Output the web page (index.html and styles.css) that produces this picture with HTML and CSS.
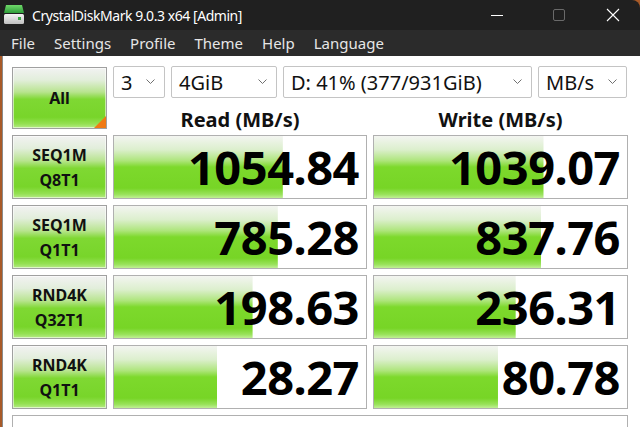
FILE: index.html
```html
<!DOCTYPE html>
<html lang="en">
<head>
<meta charset="utf-8">
<title>CrystalDiskMark 9.0.3 x64 [Admin]</title>
<link rel="stylesheet" href="styles.css">
</head>
<body>
<div class="window">
  <header class="titlebar">
    <svg class="app-icon" width="22" height="22" viewBox="0 0 22 22">
      <defs>
        <linearGradient id="g1" x1="0" y1="0" x2="0" y2="1">
          <stop offset="0" stop-color="#6fd86a"/>
          <stop offset="1" stop-color="#2f9e3a"/>
        </linearGradient>
        <linearGradient id="g2" x1="0" y1="0" x2="0" y2="1">
          <stop offset="0" stop-color="#f4f4f4"/>
          <stop offset="1" stop-color="#bfbfbf"/>
        </linearGradient>
      </defs>
      <path d="M3 1 H19 L21 9 H1 Z" fill="url(#g1)"/>
      <rect x="1" y="10" width="20" height="10" rx="1.5" fill="url(#g2)"/>
      <rect x="15" y="13" width="3" height="3" fill="#3aa845"/>
    </svg>
    <span class="title">CrystalDiskMark 9.0.3 x64 [Admin]</span>
    <div class="controls">
      <span class="ctl"><svg width="14" height="14" viewBox="0 0 14 14"><line x1="1" y1="7.5" x2="13" y2="7.5" stroke="#ffffff" stroke-width="1"/></svg></span>
      <span class="ctl"><svg width="14" height="14" viewBox="0 0 14 14"><rect x="1.5" y="1.5" width="11" height="11" rx="1.5" fill="none" stroke="#6a6a6a" stroke-width="1"/></svg></span>
      <span class="ctl"><svg width="14" height="14" viewBox="0 0 14 14"><path d="M1 1 L13 13 M13 1 L1 13" stroke="#ffffff" stroke-width="1.1"/></svg></span>
    </div>
  </header>
  <nav class="menubar">
    <span class="menu-item">File</span>
    <span class="menu-item">Settings</span>
    <span class="menu-item">Profile</span>
    <span class="menu-item">Theme</span>
    <span class="menu-item">Help</span>
    <span class="menu-item">Language</span>
  </nav>
  <main class="main">
    <div class="grid">
      <div class="btn all">All<span class="corner"></span></div>
      <div class="top">
        <div class="combos">
          <div class="combo c-count"><span>3</span><svg class="chev" width="9" height="6" viewBox="0 0 9 6"><polyline points="0.5,0.5 4.5,4.5 8.5,0.5" fill="none" stroke="#707070" stroke-width="1"/></svg></div>
          <div class="combo c-size"><span>4GiB</span><svg class="chev" width="9" height="6" viewBox="0 0 9 6"><polyline points="0.5,0.5 4.5,4.5 8.5,0.5" fill="none" stroke="#707070" stroke-width="1"/></svg></div>
          <div class="combo c-drive"><span>D: 41% (377/931GiB)</span><svg class="chev" width="9" height="6" viewBox="0 0 9 6"><polyline points="0.5,0.5 4.5,4.5 8.5,0.5" fill="none" stroke="#707070" stroke-width="1"/></svg></div>
          <div class="combo c-unit"><span>MB/s</span><svg class="chev" width="9" height="6" viewBox="0 0 9 6"><polyline points="0.5,0.5 4.5,4.5 8.5,0.5" fill="none" stroke="#707070" stroke-width="1"/></svg></div>
        </div>
        <div class="headers">
          <div class="head">Read (MB/s)</div>
          <div class="head">Write (MB/s)</div>
        </div>
      </div>

      <div class="btn label"><span>SEQ1M</span><span>Q8T1</span></div>
      <div class="cell" style="--fill: 67%">1054.84</div>
      <div class="cell" style="--fill: 67%">1039.07</div>

      <div class="btn label"><span>SEQ1M</span><span>Q1T1</span></div>
      <div class="cell" style="--fill: 65%">785.28</div>
      <div class="cell" style="--fill: 66%">837.76</div>

      <div class="btn label"><span>RND4K</span><span>Q32T1</span></div>
      <div class="cell" style="--fill: 55%">198.63</div>
      <div class="cell" style="--fill: 56%">236.31</div>

      <div class="btn label"><span>RND4K</span><span>Q1T1</span></div>
      <div class="cell" style="--fill: 41%">28.27</div>
      <div class="cell" style="--fill: 49%">80.78</div>

      <div class="comment"></div>
    </div>
  </main>
</div>
</body>
</html>
```
FILE: styles.css
```css
* { box-sizing: border-box; }

html, body {
  margin: 0;
  padding: 0;
  background: #ffffff;
  overflow: hidden;
}

body {
  width: 640px;
  height: 427px;
  font-family: "Noto Sans", "Open Sans", sans-serif;
  background: #a85a28;
}

.window {
  width: 640px;
  height: 427px;
  display: flex;
  flex-direction: column;
  overflow: hidden;
}

.titlebar {
  flex: none;
  height: 30px;
  background: #202020;
  border-top-right-radius: 8px;
  display: flex;
  align-items: center;
  color: #ffffff;
}

.app-icon {
  margin-left: 3px;
  margin-right: 7px;
  flex: none;
}

.title {
  font-size: 14px;
  letter-spacing: -0.45px;
  color: #ffffff;
}

.controls {
  margin-left: auto;
  display: flex;
  align-items: center;
}

.ctl {
  width: 62px;
  height: 30px;
  display: flex;
  align-items: center;
  justify-content: center;
}

.ctl:last-child {
  width: 46px;
  margin-right: 4px;
}

.menubar {
  flex: none;
  height: 26px;
  background: #2b2b2b;
  display: flex;
  align-items: center;
  padding-left: 11px;
  gap: 19px;
  color: #e6e6e6;
  font-size: 15px;
}

.main {
  flex: 1 1 auto;
  min-height: 0;
  overflow: hidden;
  background: #ffffff;
  margin-left: 2px;
  border-left: 1px solid #8a8a8a;
  padding: 10px 0 0 9px;
}

.grid {
  display: grid;
  grid-template-columns: 95px 254px 255px;
  grid-template-rows: 63px 64px 64px 64px 64px 40px;
  column-gap: 6px;
  row-gap: 6px;
}

.btn {
  border: 1px solid #a0a0a0;
  background: linear-gradient(to bottom,
    #f2f2f2 0%,
    #e2eedb 20%,
    #b8e48f 40%,
    #7fd833 52%,
    #78d52a 82%,
    #94e052 93%,
    #b6ea86 100%);
  box-shadow: inset 0 0 0 1px rgba(255,255,255,0.55);
  font-weight: 700;
  color: #111111;
  display: flex;
  flex-direction: column;
  align-items: center;
  justify-content: center;
}

.all {
  position: relative;
  margin-top: 1px;
  font-size: 16px;
}

.corner {
  position: absolute;
  right: 0;
  bottom: 0;
  width: 0;
  height: 0;
  border-style: solid;
  border-width: 0 0 12px 12px;
  border-color: transparent transparent #f07a14 transparent;
}

.label {
  font-size: 16px;
  line-height: 25px;
  padding-top: 2px;
}

.top {
  grid-column: 2 / 4;
  display: flex;
  flex-direction: column;
}

.combos {
  display: flex;
  gap: 6px;
  height: 32px;
}

.combo {
  height: 32px;
  border: 1px solid #c4c4c4;
  border-radius: 2px;
  background: #ffffff;
  display: flex;
  align-items: center;
  justify-content: space-between;
  padding: 0 9px 0 7px;
  font-size: 20px;
  color: #111111;
}

.c-count { width: 52px; }
.c-size { width: 106px; }
.c-drive { width: 249px; }
.c-unit { width: 89px; }

.chev { flex: none; margin-top: -1px; }

.headers {
  display: grid;
  grid-template-columns: 254px 255px;
  column-gap: 6px;
  padding-top: 10px;
}

.head {
  text-align: center;
  font-size: 20px;
  font-weight: 700;
  line-height: 24px;
  color: #111111;
}

.cell {
  border: 1px solid #b0b0b0;
  background:
    linear-gradient(to bottom,
      #f3f5f1 0%,
      #dcefcd 22%,
      #ade57a 40%,
      #7dd92c 50%,
      #77d526 84%,
      #98e25a 94%,
      #c0ef95 100%) no-repeat left top / var(--fill) 100%,
    #ffffff;
  display: flex;
  align-items: center;
  justify-content: flex-end;
  padding-right: 7px;
  font-size: 47px;
  font-weight: 700;
  letter-spacing: -0.5px;
  color: #000000;
  line-height: 1;
}

.comment {
  grid-column: 1 / 4;
  border: 1px solid #b0b0b0;
  border-bottom: none;
  background: #ffffff;
}
```
